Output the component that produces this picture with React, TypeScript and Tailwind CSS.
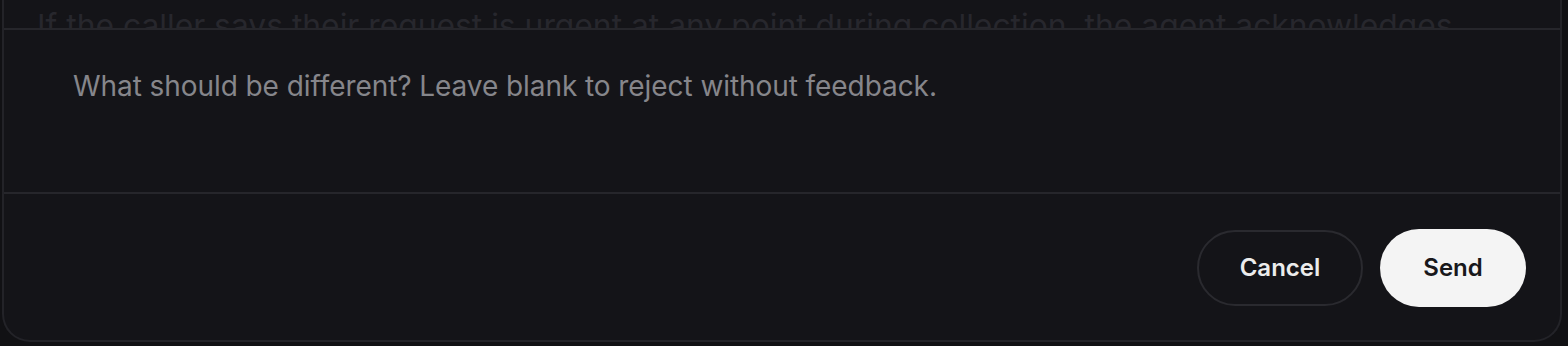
const App = () => {
  return (
    <div className="h-[346px] overflow-hidden bg-[#111114]" style={{ fontFamily: "Inter, 'Noto Sans', sans-serif" }}>
      <div className="ml-[2px] flex h-[342px] w-[1560px] flex-col rounded-b-[28px] border-2 border-t-0 border-[#232328] bg-[#141418]">
        {/* Scrolled content above, clipped */}
        <div className="h-[30px] shrink-0 overflow-hidden border-b-2 border-[#26262b] px-[33px]">
          <p className="mt-[6px] whitespace-nowrap text-[31.8px] leading-[40px] text-[#27272d]">
            If the caller says their request is urgent at any point during collection, the agent acknowledges
          </p>
        </div>

        {/* Feedback textarea */}
        <div className="h-[164px] shrink-0 border-b-2 border-[#26262b] px-[69px] pt-[38px]">
          <textarea
            className="h-[100px] w-full resize-none bg-transparent text-[28px] leading-[36px] tracking-[-0.07px] text-[#e8e8e8] outline-none placeholder:text-[#86868b]"
            placeholder="What should be different? Leave blank to reject without feedback."
          />
        </div>

        {/* Actions */}
        <div className="flex flex-1 items-center justify-end gap-[17px] pr-[34px] pt-[2px]">
          <button className="h-[76px] w-[166px] rounded-full border-2 border-[#2a2a2f] text-[24px] font-semibold text-[#ececec]">
            Cancel
          </button>
          <button className="h-[78px] w-[146px] rounded-full bg-[#f4f4f4] text-[24px] font-semibold text-[#18181b]">
            Send
          </button>
        </div>
      </div>
    </div>
  );
};

export default App;
